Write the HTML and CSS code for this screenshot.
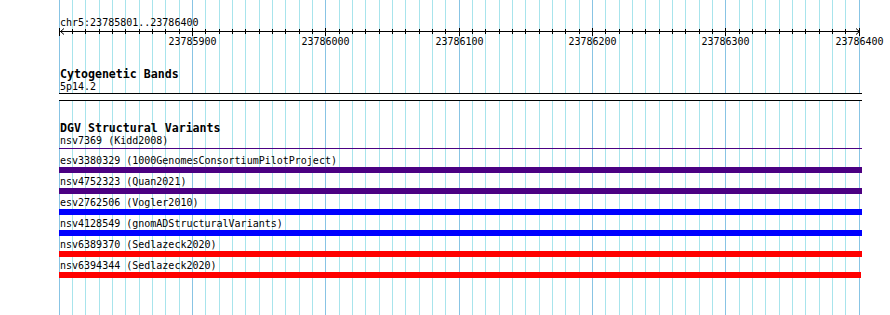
FILE: index.html
```html
<!DOCTYPE html>
<html lang="en">
<head>
    <meta charset="UTF-8">
    <meta name="viewport" content="width=device-width, initial-scale=1.0">
    <title>chr5:23785801..23786400</title>
    <link rel="stylesheet" href="styles.css">
</head>
<body>

<div class="view">
    <div class="location">chr5:23785801..23786400</div>

    <svg class="ruler" width="830" height="20" viewBox="0 0 830 20">
        <defs>
            <pattern id="minorTicks" width="40" height="10" patternUnits="userSpaceOnUse">
                <path d="M0.5 1V6M13.5 1V6M26.5 1V6" stroke="#000"/>
            </pattern>
            <pattern id="majorTicks" width="400" height="10" patternUnits="userSpaceOnUse">
                <path d="M0.5 0V8M133.5 0V8M266.5 0V8" stroke="#000"/>
            </pattern>
        </defs>
        <rect x="0" y="0" width="801" height="10" fill="url(#minorTicks)"/>
        <rect x="0" y="0" width="801" height="10" fill="url(#majorTicks)"/>
        <path d="M1 3.5H801" stroke="#000"/>
        <path d="M5 0.5L1.5 3.5L5 6.5M797 0.5L800.5 3.5L797 6.5" fill="none" stroke="#000"/>
        <g class="ruler-labels">
            <text x="133.5" y="17">23785900</text>
            <text x="266.5" y="17">23786000</text>
            <text x="400.5" y="17">23786100</text>
            <text x="533.5" y="17">23786200</text>
            <text x="666.5" y="17">23786300</text>
            <text x="800.5" y="17">23786400</text>
        </g>
    </svg>

    <section class="track cyto">
        <h2 class="track-title">Cytogenetic Bands</h2>
        <div class="label">5p14.2</div>
        <div class="band"></div>
    </section>

    <section class="track dgv">
        <h2 class="track-title">DGV Structural Variants</h2>

        <div class="feature">
            <div class="label">nsv7369 (Kidd2008)</div>
            <div class="bar thin indigo"></div>
        </div>
        <div class="feature">
            <div class="label">esv3380329 (1000GenomesConsortiumPilotProject)</div>
            <div class="bar indigo"></div>
        </div>
        <div class="feature">
            <div class="label">nsv4752323 (Quan2021)</div>
            <div class="bar indigo"></div>
        </div>
        <div class="feature">
            <div class="label">esv2762506 (Vogler2010)</div>
            <div class="bar blue"></div>
        </div>
        <div class="feature">
            <div class="label">nsv4128549 (gnomADStructuralVariants)</div>
            <div class="bar blue"></div>
        </div>
        <div class="feature">
            <div class="label">nsv6389370 (Sedlazeck2020)</div>
            <div class="bar red"></div>
        </div>
        <div class="feature">
            <div class="label">nsv6394344 (Sedlazeck2020)</div>
            <div class="bar red short"></div>
        </div>
    </section>
</div>

</body>
</html>
```

FILE: styles.css
```css
body {
    margin: 0;
    background-color: #fff;
    font-family: "DejaVu Sans Mono", "Liberation Mono", monospace;
    font-size: 10px;
    color: #000;
}

/* grid: minor line every 10bp, major every 100bp (1.333px per bp) */
.view {
    margin-left: 59px;
    width: 801px;
    height: 315px;
    padding-top: 16px;
    box-sizing: border-box;
    background-image:
        repeating-linear-gradient(to right, #88c4e4 0 1px, transparent 1px 133px, #88c4e4 133px 134px, transparent 134px 266px, #88c4e4 266px 267px, transparent 267px 400px),
        repeating-linear-gradient(to right, #a8e4ec 0 1px, transparent 1px 13px, #a8e4ec 13px 14px, transparent 14px 26px, #a8e4ec 26px 27px, transparent 27px 40px);
}

.location,
.label {
    box-sizing: border-box;
    line-height: 12px;
    height: 12px;
    padding: 1px 0 0 1px;
    white-space: nowrap;
}

.ruler {
    display: block;
    overflow: visible;
}
.ruler-labels {
    font-family: "DejaVu Sans Mono", "Liberation Mono", monospace;
    font-size: 10px;
    text-anchor: middle;
}

.track-title {
    margin: 0;
    padding-left: 1px;
    font-size: 11.6px;
    font-weight: bold;
    line-height: 12px;
    height: 12px;
}
.cyto {
    margin-top: 20px;
}
.dgv {
    margin-top: 21px;
}

.band {
    margin-top: 1px;
    width: 803px;
    height: 6px;
    background-color: #fff;
    border-top: 1px solid #000;
    border-bottom: 1px solid #000;
}

.feature .label {
    margin-bottom: 1px;
}
.bar {
    width: 803px;
    height: 6px;
    margin-bottom: 2px;
}
.bar.thin {
    height: 1px;
    margin-top: 2px;
    margin-bottom: 5px;
}
.bar.short {
    width: 802px;
}
.indigo { background-color: #4b0082; }
.blue { background-color: #0000ff; }
.red { background-color: #ff0000; }
```
